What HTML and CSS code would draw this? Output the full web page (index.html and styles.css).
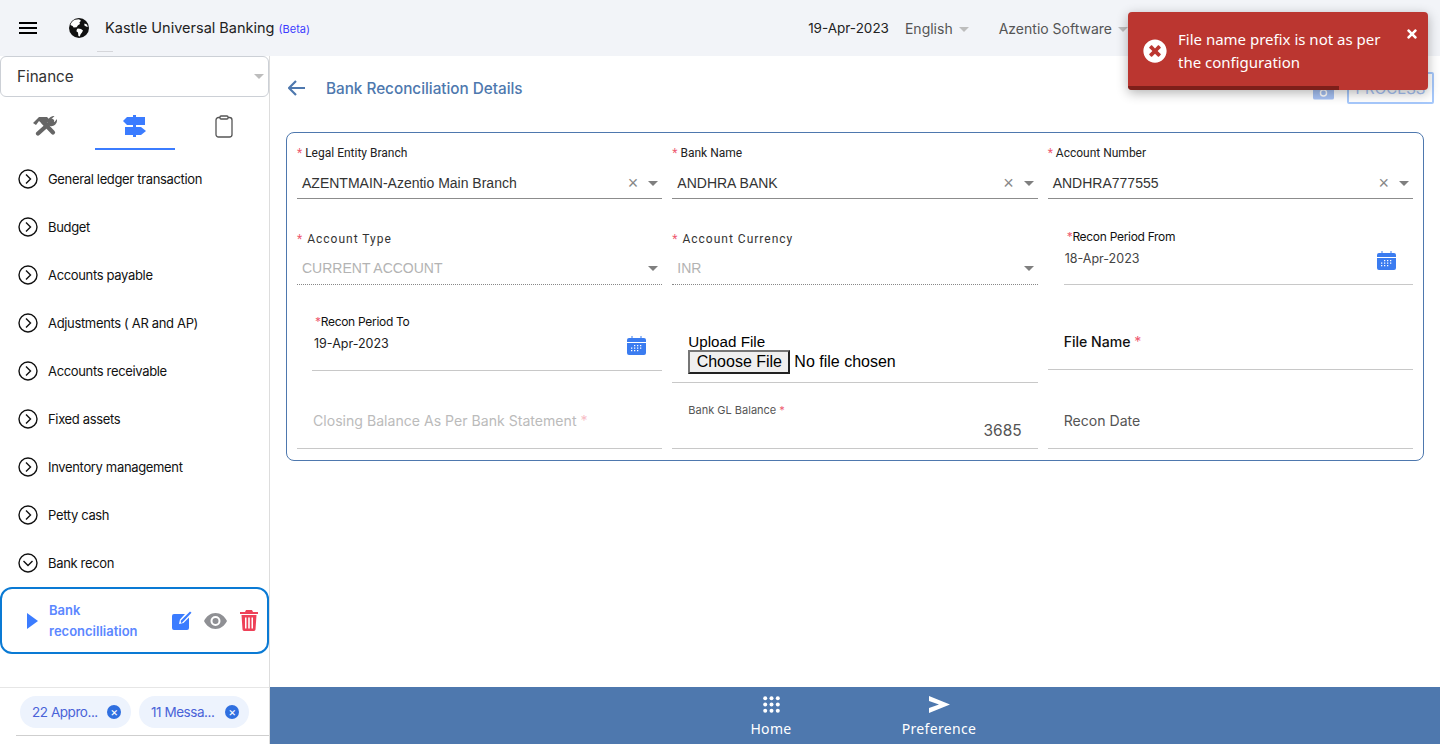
FILE: index.html
```html
<!DOCTYPE html>
<html lang="en">
<head>
    <meta charset="UTF-8">
    <meta name="viewport" content="width=device-width, initial-scale=1.0">
    <title>Bank Reconciliation Details</title>
    <link rel="stylesheet" href="styles.css">
</head>
<body>
    <!-- Top bar -->
    <header class="topbar">
        <svg class="menu-icon" width="18" height="12" viewBox="0 0 18 12"><path d="M0 0h18v2H0zM0 5h18v2H0zM0 10h18v2H0z" fill="#000"/></svg>
        <svg class="globe-icon" width="20" height="20" viewBox="0 0 20 20">
            <circle cx="10" cy="10" r="10" fill="#111"/>
            <path d="M6 1.800l4-.6 2 1.600-1.600 1.600.6 1.600-2 1.200-1.400 2-3 .4-1-1.600-2.200-1C2 4.400 4 2.800 6 1.800zM9 10.600l3 .4 2 1.600-1 2-1.400 1.600-.8 2.200-1.400-.4-.4-3.400-1.600-1.400.6-2.200zM15.600 5.400l2.400 1 .8 2.600-1.800-.4-1.800-1.400z" fill="#fff"/>
        </svg>
        <div class="brand">Kastle Universal Banking <span class="beta">(Beta)</span></div>
        <div class="top-right">
            <span class="top-date">19-Apr-2023</span>
            <span class="top-drop lang">English<i class="caret"></i></span>
            <span class="top-drop org">Azentio Software<i class="caret"></i></span>
        </div>
    </header>

    <div class="shell">
        <!-- Sidebar -->
        <aside class="sidebar">
            <div class="module-select">Finance<i class="caret"></i></div>

            <div class="tabs">
                <div class="tab tab-tools">
                    <svg width="24" height="20" viewBox="0 0 24 20">
                        <path d="M5 17.500L19 5" fill="none" stroke="#666" stroke-width="4.200" stroke-linecap="round"/>
                        <path d="M20 16.500L10 6" fill="none" stroke="#666" stroke-width="4.200" stroke-linecap="round"/>
                        <path d="M0 7l6-6h8l3 3-6 5.500-5-4.500-3 4z" fill="#666"/>
                        <path d="M15 7c-.5-4 2-7 6.500-7L18.500 3l.5 2.500 2.500.5L24 3c.5 4.500-3 8-7 7z" fill="#666"/>
                    </svg>
                </div>
                <div class="tab tab-active">
                    <svg width="24" height="22" viewBox="0 0 24 22">
                        <path d="M10 0h3v22h-3z" fill="#3b7cff"/>
                        <path d="M0 6l4-4h18v8H4zM2 12h16l5 4-5 4H2z" fill="#3b7cff"/>
                    </svg>
                </div>
                <div class="tab tab-notes">
                    <svg width="18" height="23" viewBox="0 0 18 23">
                        <rect x="1" y="2.500" width="16" height="19.500" rx="2.500" fill="none" stroke="#555" stroke-width="1.300"/>
                        <rect x="5" y="1" width="8" height="3" rx="1" fill="#fff" stroke="#555" stroke-width="1.300"/>
                    </svg>
                </div>
            </div>

            <ul class="menu">
                <li class="menu-item"><svg class="chev" width="20" height="20" viewBox="0 0 20 20"><circle cx="10" cy="10" r="9" fill="none" stroke="#111" stroke-width="1.400"/><path d="M8 5.500l4.500 4.500L8 14.500" fill="none" stroke="#111" stroke-width="1.400"/></svg>General ledger transaction</li>
                <li class="menu-item"><svg class="chev" width="20" height="20" viewBox="0 0 20 20"><circle cx="10" cy="10" r="9" fill="none" stroke="#111" stroke-width="1.400"/><path d="M8 5.500l4.500 4.500L8 14.500" fill="none" stroke="#111" stroke-width="1.400"/></svg>Budget</li>
                <li class="menu-item"><svg class="chev" width="20" height="20" viewBox="0 0 20 20"><circle cx="10" cy="10" r="9" fill="none" stroke="#111" stroke-width="1.400"/><path d="M8 5.500l4.500 4.500L8 14.500" fill="none" stroke="#111" stroke-width="1.400"/></svg>Accounts payable</li>
                <li class="menu-item"><svg class="chev" width="20" height="20" viewBox="0 0 20 20"><circle cx="10" cy="10" r="9" fill="none" stroke="#111" stroke-width="1.400"/><path d="M8 5.500l4.500 4.500L8 14.500" fill="none" stroke="#111" stroke-width="1.400"/></svg>Adjustments ( AR and AP)</li>
                <li class="menu-item"><svg class="chev" width="20" height="20" viewBox="0 0 20 20"><circle cx="10" cy="10" r="9" fill="none" stroke="#111" stroke-width="1.400"/><path d="M8 5.500l4.500 4.500L8 14.500" fill="none" stroke="#111" stroke-width="1.400"/></svg>Accounts receivable</li>
                <li class="menu-item"><svg class="chev" width="20" height="20" viewBox="0 0 20 20"><circle cx="10" cy="10" r="9" fill="none" stroke="#111" stroke-width="1.400"/><path d="M8 5.500l4.500 4.500L8 14.500" fill="none" stroke="#111" stroke-width="1.400"/></svg>Fixed assets</li>
                <li class="menu-item"><svg class="chev" width="20" height="20" viewBox="0 0 20 20"><circle cx="10" cy="10" r="9" fill="none" stroke="#111" stroke-width="1.400"/><path d="M8 5.500l4.500 4.500L8 14.500" fill="none" stroke="#111" stroke-width="1.400"/></svg>Inventory management</li>
                <li class="menu-item"><svg class="chev" width="20" height="20" viewBox="0 0 20 20"><circle cx="10" cy="10" r="9" fill="none" stroke="#111" stroke-width="1.400"/><path d="M8 5.500l4.500 4.500L8 14.500" fill="none" stroke="#111" stroke-width="1.400"/></svg>Petty cash</li>
                <li class="menu-item"><svg class="chev" width="20" height="20" viewBox="0 0 20 20"><circle cx="10" cy="10" r="9" fill="none" stroke="#111" stroke-width="1.400"/><path d="M5.500 8l4.500 4.500L14.500 8" fill="none" stroke="#111" stroke-width="1.400"/></svg>Bank recon</li>
            </ul>

            <div class="sub-item">
                <svg class="sub-arrow" width="11" height="16" viewBox="0 0 11 16"><path d="M0 0l11 8-11 8z" fill="#3b7cff"/></svg>
                <div class="sub-name">Bank reconcilliation</div>
                <svg class="sub-icon" width="20" height="20" viewBox="0 0 20 20">
                    <path d="M2 3h11l-5 5.500-1 4.500 4.500-1L17 6.500V17a2 2 0 0 1-2 2H2a2 2 0 0 1-2-2V5a2 2 0 0 1 2-2z" fill="#3b7cff"/>
                    <path d="M9 12l-.3-2.300L18 .5l1.500 1.300-9.200 9.700z" fill="#3b7cff"/>
                </svg>
                <svg class="sub-icon icon-eye" width="23" height="16" viewBox="0 0 23 16">
                    <path d="M11.500 0C6.500 0 2.500 3.200 0 8c2.500 4.800 6.500 8 11.500 8S20.500 12.800 23 8c-2.500-4.800-6.500-8-11.500-8zm0 13a5 5 0 1 1 0-10 5 5 0 0 1 0 10zm0-8a3 3 0 1 0 0 6 3 3 0 0 0 0-6z" fill="#8f9094"/>
                </svg>
                <svg class="sub-icon icon-trash" width="18" height="21" viewBox="0 0 18 21">
                    <path d="M6 0h6l1 2h5v2H0V2h5zM1.500 5h15l-1 14.500A1.600 1.600 0 0 1 14 21H4a1.600 1.600 0 0 1-1.500-1.500zM5 7.500v11h1.500v-11zm3.200 0v11h1.600v-11zm3.300 0v11H13v-11z" fill="#ee4158" fill-rule="evenodd"/>
                </svg>
            </div>

            <div class="side-foot">
                <div class="chips">
                    <span class="chip">22 Appro...<span class="chip-x">×</span></span>
                    <span class="chip">11 Messa...<span class="chip-x">×</span></span>
                </div>
            </div>
        </aside>

        <!-- Main content -->
        <main class="main">
            <div class="content">
                <div class="page-head">
                    <svg width="18" height="16" viewBox="0 0 18 16"><path d="M8 1L1 8l7 7M1 8h16" fill="none" stroke="#4e78ae" stroke-width="2.200"/></svg>
                    <h1 class="page-title">Bank Reconciliation Details</h1>
                    <svg class="head-icon" width="21" height="18" viewBox="0 0 22 18">
                        <path d="M2 2h18a2 2 0 0 1 2 2v12a2 2 0 0 1-2 2H2a2 2 0 0 1-2-2V4a2 2 0 0 1 2-2z" fill="#a6c1f3"/>
                        <circle cx="11" cy="11" r="3.200" fill="none" stroke="#fff" stroke-width="1.500"/>
                    </svg>
                    <button class="btn-process" type="button">PROCESS</button>
                </div>

                <form class="panel">
                    <div class="field select-field">
                        <label class="sel-label"><b>*</b> Legal Entity Branch</label>
                        <div class="sel-value"><span>AZENTMAIN-Azentio Main Branch</span><em>×</em><i class="caret dark"></i></div>
                    </div>
                    <div class="field select-field">
                        <label class="sel-label"><b>*</b> Bank Name</label>
                        <div class="sel-value"><span>ANDHRA BANK</span><em>×</em><i class="caret dark"></i></div>
                    </div>
                    <div class="field select-field">
                        <label class="sel-label"><b>*</b> Account Number</label>
                        <div class="sel-value"><span>ANDHRA777555</span><em>×</em><i class="caret dark"></i></div>
                    </div>

                    <div class="field select-field disabled">
                        <label class="sel-label spaced"><b>*</b> Account Type</label>
                        <div class="sel-value"><span>CURRENT ACCOUNT</span><i class="caret dark"></i></div>
                    </div>
                    <div class="field select-field disabled">
                        <label class="sel-label spaced"><b>*</b> Account Currency</label>
                        <div class="sel-value"><span>INR</span><i class="caret dark"></i></div>
                    </div>
                    <div class="field date-field from">
                        <label class="date-label"><b>*</b>Recon Period From</label>
                        <div class="date-value grey"><span>18-Apr-2023</span>
                            <svg width="19" height="19" viewBox="0 0 19 19"><path d="M2 2h2.500V0h1v2h8V0h1v2H17a2 2 0 0 1 2 2v2H0V4a2 2 0 0 1 2-2zM0 7h19v10a2 2 0 0 1-2 2H2a2 2 0 0 1-2-2z" fill="#3b7cf0"/><path d="M7 9h1.300v1.300H7zM10 9h1.300v1.300H10zM13 9h1.300v1.300H13zM4 11.500h1.300v1.300H4zM7 11.500h1.300v1.300H7zM10 11.500h1.300v1.300H10zM13 11.500h1.300v1.300H13zM4 14h1.300v1.300H4zM7 14h1.300v1.300H7zM10 14h1.300v1.300H10z" fill="#fff"/></svg>
                        </div>
                    </div>

                    <div class="field date-field to">
                        <label class="date-label"><b>*</b>Recon Period To</label>
                        <div class="date-value"><span>19-Apr-2023</span>
                            <svg width="19" height="19" viewBox="0 0 19 19"><path d="M2 2h2.500V0h1v2h8V0h1v2H17a2 2 0 0 1 2 2v2H0V4a2 2 0 0 1 2-2zM0 7h19v10a2 2 0 0 1-2 2H2a2 2 0 0 1-2-2z" fill="#3b7cf0"/><path d="M7 9h1.300v1.300H7zM10 9h1.300v1.300H10zM13 9h1.300v1.300H13zM4 11.500h1.300v1.300H4zM7 11.500h1.300v1.300H7zM10 11.500h1.300v1.300H10zM13 11.500h1.300v1.300H13zM4 14h1.300v1.300H4zM7 14h1.300v1.300H7zM10 14h1.300v1.300H10z" fill="#fff"/></svg>
                        </div>
                    </div>
                    <div class="field upload-field">
                        <label class="upload-label">Upload File</label>
                        <div class="upload-row"><span class="choose-btn">Choose File</span><span>No file chosen</span></div>
                    </div>
                    <div class="field text-field file-name">
                        <label>File Name <b>*</b></label>
                    </div>

                    <div class="field text-field closing">
                        <label>Closing Balance As Per Bank Statement <b>*</b></label>
                    </div>
                    <div class="field balance-field">
                        <label>Bank GL Balance <b>*</b></label>
                        <div class="balance-value">3685</div>
                    </div>
                    <div class="field text-field recon-date">
                        <label>Recon Date</label>
                    </div>
                </form>
            </div>

            <nav class="bottom-bar">
                <div class="bottom-item">
                    <svg width="17" height="17" viewBox="0 0 17 17" fill="#fff"><circle cx="2.200" cy="2.200" r="2"/><circle cx="8.500" cy="2.200" r="2"/><circle cx="14.800" cy="2.200" r="2"/><circle cx="2.200" cy="8.500" r="2"/><circle cx="8.500" cy="8.500" r="2"/><circle cx="14.800" cy="8.500" r="2"/><circle cx="2.200" cy="14.800" r="2"/><circle cx="8.500" cy="14.800" r="2"/><circle cx="14.800" cy="14.800" r="2"/></svg>
                    <span>Home</span>
                </div>
                <div class="bottom-item">
                    <svg width="21" height="17" viewBox="0 0 21 17"><path d="M0 0l21 8.500L0 17v-5l10-3.500L0 5z" fill="#fff"/></svg>
                    <span>Preference</span>
                </div>
            </nav>
        </main>
    </div>

    <!-- Error toast -->
    <div class="toast">
        <svg class="toast-icon" width="24" height="24" viewBox="0 0 512 512"><path d="M256 8C119 8 8 119 8 256s111 248 248 248 248-111 248-248S393 8 256 8zm121.600 313.100c4.700 4.700 4.700 12.300 0 17L338 377.600c-4.700 4.700-12.300 4.700-17 0L256 312l-65.100 65.600c-4.700 4.700-12.300 4.700-17 0L134.400 338c-4.700-4.700-4.700-12.300 0-17l65.600-65-65.600-65.100c-4.700-4.700-4.700-12.300 0-17l39.600-39.600c4.700-4.700 12.300-4.700 17 0l65 65.700 65.100-65.600c4.700-4.700 12.300-4.700 17 0l39.600 39.600c4.700 4.700 4.700 12.300 0 17L312 256l65.600 65.100z" fill="#fff"/></svg>
        <div class="toast-text">File name prefix is not as per the configuration</div>
        <svg class="toast-close" width="10" height="14" viewBox="0 0 352 512"><path d="M242.720 256l100.070-100.070c12.280-12.280 12.280-32.190 0-44.480l-22.240-22.240c-12.280-12.280-32.190-12.280-44.480 0L176 189.280 75.930 89.210c-12.280-12.280-32.190-12.280-44.480 0L9.210 111.450c-12.280 12.280-12.280 32.190 0 44.480L109.280 256 9.210 356.070c-12.280 12.280-12.280 32.190 0 44.480l22.240 22.240c12.280 12.280 32.200 12.280 44.480 0L176 322.720l100.070 100.070c12.280 12.280 32.200 12.280 44.480 0l22.240-22.240c12.280-12.280 12.280-32.190 0-44.480L242.720 256z" fill="#fff"/></svg>
        <div class="toast-progress"></div>
    </div>
</body>
</html>
```

FILE: styles.css
```css
* {
    box-sizing: border-box;
}
html, body {
    margin: 0;
    height: 744px;
    overflow: hidden;
}
body {
    font-family: Inter, "Liberation Sans", sans-serif;
    color: #111;
    background-color: #fff;
    position: relative;
}
.caret {
    display: inline-block;
    width: 0;
    height: 0;
    border-left: 5px solid transparent;
    border-right: 5px solid transparent;
    border-top: 5px solid #bdbdbd;
}
.caret.dark {
    border-left-width: 5.5px;
    border-right-width: 5.5px;
    border-top-color: #7f7f7f;
}

/* Top bar */
.topbar {
    height: 56px;
    background-color: #f2f4f8;
    display: flex;
    align-items: center;
    padding-left: 19px;
    position: relative;
}
.topbar::after {
    content: "";
    position: absolute;
    left: 97px;
    top: 51px;
    width: 16px;
    height: 1px;
    background-color: #d5d6da;
}
.globe-icon {
    margin-left: 32px;
}
.brand {
    margin-left: 16px;
    margin-bottom: 1px;
    font-size: 14.5px;
    color: #222;
}
.beta {
    font-size: 11px;
    color: #3d3dff;
}
.top-right {
    margin-left: auto;
    display: flex;
    align-items: center;
    font-size: 14px;
    color: #555;
    padding-right: 312px;
}
.top-date {
    font-size: 13.5px;
    color: #222;
}
.top-drop .caret {
    margin-left: 6px;
    vertical-align: 2px;
}
.lang {
    margin-left: 16px;
}
.org {
    margin-left: 30px;
}

/* Sidebar */
.shell {
    display: flex;
    height: 688px;
}
.sidebar {
    width: 270px;
    flex: none;
    border-right: 1px solid #ddd;
    display: flex;
    flex-direction: column;
}
.module-select {
    height: 41px;
    border: 1px solid #ccd0d6;
    border-radius: 6px;
    font-size: 15.2px;
    color: #333;
    padding: 0 4px 1px 16px;
    display: flex;
    align-items: center;
    justify-content: space-between;
    background-color: #fff;
}
.tabs {
    display: flex;
    height: 53px;
}
.tab {
    flex: none;
    height: 53px;
    display: flex;
    align-items: center;
    justify-content: center;
    padding-top: 7px;
    border-bottom: 2px solid transparent;
}
.tab-tools {
    width: 90px;
    margin-right: 5px;
}
.tab-active {
    width: 80px;
    border-bottom-color: #3b7cff;
}
.tab-notes {
    width: 94px;
    margin-left: 0;
}
.tab-notes svg {
    margin-left: 4px;
}
.menu {
    list-style: none;
    margin: 5px 0 0;
    padding: 0;
}
.menu-item {
    height: 48px;
    display: flex;
    align-items: center;
    font-size: 13px;
    letter-spacing: -0.34px;
    color: #111;
    padding-left: 18px;
}
.chev {
    margin-right: 10px;
    flex: none;
}
.sub-item {
    height: 67px;
    border: 2px solid #0a7ad4;
    border-radius: 12px;
    display: flex;
    align-items: center;
    padding-left: 25px;
}
.sub-arrow {
    flex: none;
}
.sub-name {
    width: 123px;
    margin-left: 11px;
    font-size: 13px;
    font-weight: 600;
    line-height: 21px;
    color: #5b87ff;
}
.sub-icon {
    flex: none;
}
.icon-eye {
    margin-left: 12px;
}
.icon-trash {
    margin-left: 13px;
}
.side-foot {
    margin-top: 33px;
    border-top: 1px solid #e6e6e6;
    flex: 1;
    padding: 8px 0 0 20px;
    position: relative;
}
.side-foot::after {
    content: "";
    position: absolute;
    left: 16px;
    right: 0;
    top: 47px;
    height: 1px;
    background-color: #cfcfcf;
}
.chips {
    display: flex;
    gap: 8px;
}
.chip {
    height: 32px;
    width: 111px;
    border-radius: 16px;
    background-color: #edf3fd;
    color: #4a63d8;
    font-size: 13.5px;
    letter-spacing: -0.45px;
    display: flex;
    align-items: center;
    justify-content: space-between;
    padding: 0 10px 0 12px;
}
.chip:last-child {
    width: 110px;
}
.chip-x {
    width: 14px;
    height: 14px;
    border-radius: 50%;
    background-color: #2f6fe0;
    color: #fff;
    font-size: 12px;
    line-height: 14px;
    text-align: center;
}

/* Main */
.main {
    flex: 1;
    display: flex;
    flex-direction: column;
    min-width: 0;
}
.content {
    flex: 1;
    padding: 16px 16px 0 16px;
}
.page-head {
    display: flex;
    align-items: center;
    height: 32px;
    padding-left: 2px;
    margin-bottom: 28px;
}
.page-title {
    margin: 0 0 0 20px;
    font-size: 15.3px;
    font-weight: 500;
    letter-spacing: -0.02px;
    color: #4e78ae;
}
.head-icon {
    margin-left: auto;
    margin-top: 6px;
}
.btn-process {
    margin-left: 13px;
    margin-right: -10px;
    width: 87px;
    height: 32px;
    flex: none;
    border: 2px solid #a6c8fb;
    background-color: #fff;
    color: #a6c1f3;
    font-family: Inter, sans-serif;
    font-size: 15px;
    border-radius: 2px;
    padding: 0;
}

/* Form panel */
.panel {
    border: 1px solid #4e78ae;
    border-radius: 8px;
    height: 329px;
    padding: 0 10px 11px;
    display: grid;
    grid-template-columns: repeat(3, 1fr);
    grid-template-rows: 66px 86px 98px 66px;
    column-gap: 10px;
}
.field {
    position: relative;
    min-width: 0;
    border-bottom: 1px solid #c8c8c8;
}
.field label b {
    font-weight: 400;
    color: #ee5a70;
}
.select-field {
    border-bottom-color: #8c8c8c;
    font-family: Roboto, sans-serif;
    padding-top: 12px;
}
.sel-label {
    display: block;
    font-size: 12px;
    line-height: 16px;
    color: #222;
}
.sel-label.spaced {
    letter-spacing: 1px;
    color: #333;
}
.select-field.disabled {
    border-bottom: 1px dotted #888;
    padding-top: 31px;
}
.sel-value {
    display: flex;
    align-items: center;
    height: 20px;
    margin-top: 12px;
    padding: 0 4px 0 5px;
    font-family: "Liberation Sans", sans-serif;
    font-size: 14px;
    color: #333;
}
.sel-value span {
    flex: 1;
}
.sel-value em {
    font-style: normal;
    font-size: 18px;
    color: #888;
    margin-right: 10px;
}
.disabled .sel-label {
    position: relative;
    top: 1px;
}
.disabled .sel-value span {
    color: #b3b3b3;
}
.date-field {
    font-family: Inter, sans-serif;
}
.date-field.from {
    margin-left: 16px;
    padding-top: 30px;
}
.date-field.to {
    margin-left: 15px;
    margin-bottom: 12px;
    padding-top: 29px;
}
.date-label {
    display: block;
    padding-left: 3px;
    font-size: 12px;
    line-height: 15px;
    letter-spacing: -0.3px;
    color: #111;
}
.date-value {
    display: flex;
    justify-content: space-between;
    padding: 0 16px 0 2px;
    margin-top: 7px;
    font-size: 12.5px;
    line-height: 16px;
    color: #222;
}
.date-value.grey {
    color: #444;
    padding: 0 17px 0 1px;
}
.upload-field {
    padding: 49px 0 0 16px;
    font-family: "Liberation Sans", sans-serif;
    font-size: 15.2px;
    color: #000;
}
.upload-label {
    display: block;
    line-height: 16px;
}
.upload-row {
    display: flex;
    align-items: center;
    font-size: 16px;
    line-height: 24px;
}
.choose-btn {
    width: 102px;
    height: 24px;
    margin-right: 4px;
    border: 2px solid #000;
    border-color: #767676 #222 #222 #767676;
    background-color: #efefef;
    text-align: center;
    line-height: 20px;
}
.text-field {
    display: flex;
    align-items: flex-end;
    font-size: 14.1px;
}
.file-name {
    margin-bottom: 13px;
    padding: 0 0 19px 16px;
    color: #111;
    font-weight: 500;
}
.closing {
    padding: 0 0 19px 16px;
    color: #bbb;
}
.closing b {
    opacity: 0.4;
}
.recon-date {
    padding: 0 0 19px 16px;
    color: #555;
}
.balance-field {
    padding: 20px 16px 0 16px;
}
.balance-field label {
    display: block;
    font-size: 11px;
    line-height: 14px;
    color: #555;
}
.balance-value {
    margin-top: 4px;
    text-align: right;
    font-size: 15.5px;
    color: #555;
}

/* Bottom bar */
.bottom-bar {
    height: 57px;
    flex: none;
    background-color: #4e78ae;
    display: flex;
    justify-content: center;
    color: #fff;
    font-family: "Noto Sans", sans-serif;
    font-size: 14px;
}
.bottom-item {
    width: 168px;
    display: flex;
    flex-direction: column;
    align-items: center;
    padding-top: 9px;
    gap: 6px;
    letter-spacing: 0.35px;
    line-height: 20px;
}

/* Toast */
.toast {
    position: absolute;
    left: 1128px;
    top: 12px;
    width: 300px;
    height: 78px;
    background-color: #bb3630;
    border-radius: 4px;
    box-shadow: 0 3px 12px rgba(0, 0, 0, 0.3);
    color: #fff;
    overflow: hidden;
    font-family: "Noto Sans", sans-serif;
    font-size: 15px;
    line-height: 23px;
}
.toast-icon {
    position: absolute;
    left: 15px;
    top: 27px;
}
.toast-text {
    position: absolute;
    left: 50px;
    top: 16px;
    width: 220px;
}
.toast-close {
    position: absolute;
    left: 279px;
    top: 15px;
}
.toast-progress {
    position: absolute;
    left: 0;
    bottom: 0;
    width: 211px;
    height: 4px;
    background-color: #7d1f1a;
}
```
